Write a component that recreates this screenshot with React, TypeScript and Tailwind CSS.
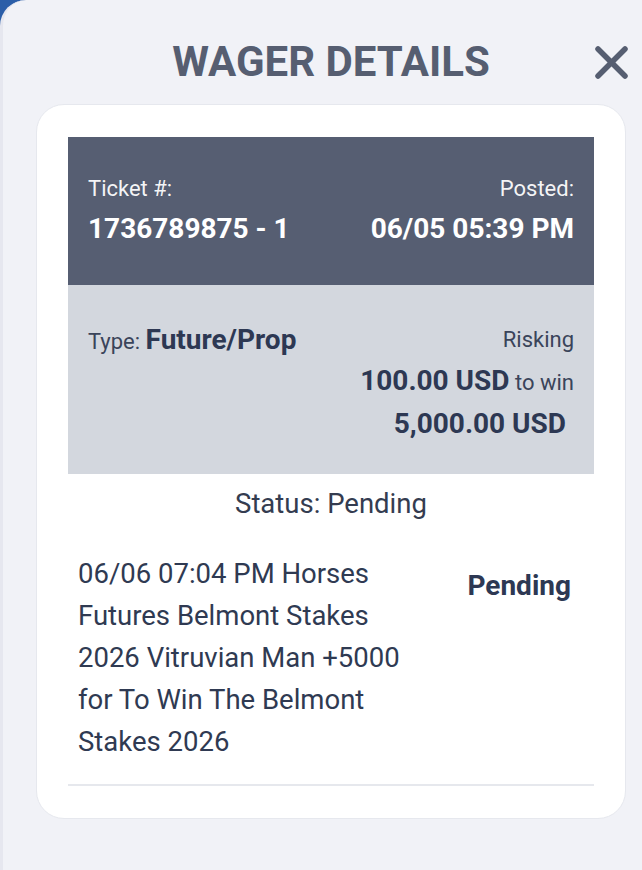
const ticket = {
  id: '1736789875 - 1',
  posted: '06/05 05:39 PM',
  type: 'Future/Prop',
  risk: '100.00 USD',
  toWin: '5,000.00 USD',
  status: 'Pending',
  description:
    '06/06 07:04 PM Horses Futures Belmont Stakes 2026 Vitruvian Man +5000 for To Win The Belmont Stakes 2026',
}

function CloseIcon() {
  return (
    <svg width="36" height="36" viewBox="0 0 36 36" fill="none" stroke="currentColor" strokeWidth="5.5" strokeLinecap="round">
      <path d="M6 6 33 33" />
      <path d="M33 6 6 33" />
    </svg>
  )
}

function WagerCard() {
  return (
    <div className="ml-[33px] mt-[21px] w-[590px] rounded-[28px] border border-[#e6e8ee] bg-white px-[31px] pb-[32px] pt-[32px]">
      {/* ticket header */}
      <div className="flex h-[148px] items-center justify-between bg-[#565e72] px-[20px] text-white">
        <div>
          <p className="text-[22px] leading-[28px] text-white/95">Ticket #:</p>
          <p className="mt-[8px] text-[28px] font-bold leading-[36px]">{ticket.id}</p>
        </div>
        <div className="text-right">
          <p className="text-[22px] leading-[28px] text-white/95">Posted:</p>
          <p className="mt-[8px] text-[28px] font-bold leading-[36px]">{ticket.posted}</p>
        </div>
      </div>

      {/* amounts */}
      <div className="flex h-[189px] items-start justify-between bg-[#d3d7de] px-[20px] pt-[34px] text-[#2d3853]">
        <p className="text-[22px] leading-[41px] text-[#3a445a]">
          Type: <span className="text-[28px] font-bold text-[#2d3853]">{ticket.type}</span>
        </p>
        <div className="text-right">
          <p className="text-[22px] leading-[41px] text-[#3a445a]">Risking</p>
          <p className="text-[22px] leading-[41px] text-[#3a445a]">
            <span className="text-[28px] font-bold text-[#2d3853]">{ticket.risk}</span> to win
          </p>
          <p className="pr-[8px] text-[28px] font-bold leading-[41px]">{ticket.toWin}</p>
        </div>
      </div>

      <p className="mt-[12px] text-center text-[27.5px] leading-[36px] text-[#343c50]">
        Status: {ticket.status}
      </p>

      {/* wager line */}
      <div className="mt-[31px] flex items-start justify-between pl-[10px] pr-[23px]">
        <p className="w-[340px] text-[27.5px] leading-[42px] text-[#2f3a52]">{ticket.description}</p>
        <p className="mt-[12px] text-[28px] font-bold leading-[42px] text-[#2d3853]">
          {ticket.status}
        </p>
      </div>

      <div className="mt-[21px] h-[2px] bg-[#e6e8ed]" />
    </div>
  )
}

export default function App() {
  return (
    <div className="h-[870px] w-[642px] overflow-hidden bg-[#2b5ea8] font-['Roboto',sans-serif]">
      <div className="h-full rounded-tl-[26px] border-l-[3px] border-[#e6e7ef] bg-[#f1f2f7]">
        <div className="relative pt-[41px]">
          <h2 className="ml-[33px] w-[590px] text-center text-[42px] font-bold uppercase leading-[42px] text-[#565e71]">
            Wager Details
          </h2>
          <button aria-label="Close" className="absolute right-[14px] top-[43px] text-[#565e71]">
            <CloseIcon />
          </button>
        </div>
        <WagerCard />
      </div>
    </div>
  )
}
